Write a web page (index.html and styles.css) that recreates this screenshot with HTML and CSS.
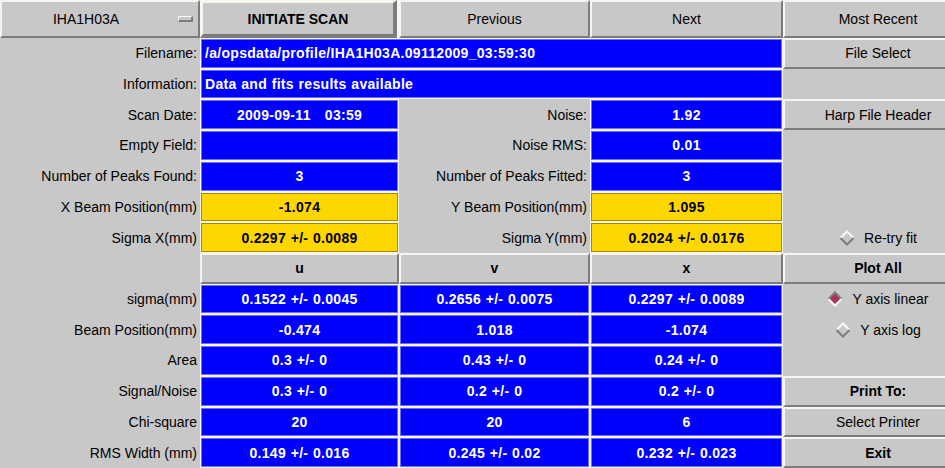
FILE: index.html
```html
<!DOCTYPE html>
<html>
<head>
<meta charset="utf-8">
<link rel="stylesheet" href="styles.css">
</head>
<body>
<div class="panel">
  <div class="cell btn opt"><span class="opt-text">IHA1H03A</span><span class="opt-ind"></span></div>
  <div class="cell btn dflt bold">INITIATE SCAN</div>
  <div class="cell btn">Previous</div>
  <div class="cell btn">Next</div>
  <div class="cell btn">Most Recent</div>

  <div class="cell lbl">Filename:</div>
  <div class="cell val left span3">/a/opsdata/profile/IHA1H03A.09112009_03:59:30</div>
  <div class="cell btn">File Select</div>

  <div class="cell lbl">Information:</div>
  <div class="cell val left span3">Data and fits results available</div>
  <div class="cell"></div>

  <div class="cell lbl">Scan Date:</div>
  <div class="cell val">2009-09-11   03:59</div>
  <div class="cell lbl">Noise:</div>
  <div class="cell val">1.92</div>
  <div class="cell btn">Harp File Header</div>

  <div class="cell lbl">Empty Field:</div>
  <div class="cell val"></div>
  <div class="cell lbl">Noise RMS:</div>
  <div class="cell val">0.01</div>
  <div class="cell"></div>

  <div class="cell lbl">Number of Peaks Found:</div>
  <div class="cell val">3</div>
  <div class="cell lbl">Number of Peaks Fitted:</div>
  <div class="cell val">3</div>
  <div class="cell"></div>

  <div class="cell lbl">X Beam Position(mm)</div>
  <div class="cell val yel">-1.074</div>
  <div class="cell lbl">Y Beam Position(mm)</div>
  <div class="cell val yel">1.095</div>
  <div class="cell"></div>

  <div class="cell lbl">Sigma X(mm)</div>
  <div class="cell val yel">0.2297 +/- 0.0089</div>
  <div class="cell lbl">Sigma Y(mm)</div>
  <div class="cell val yel">0.2024 +/- 0.0176</div>
  <div class="cell radio">
    <svg class="dia" width="16" height="16" viewBox="0 0 16 16"><polygon points="8,1.5 14.5,8 8,14.5 1.5,8" fill="#c8c8c8"/><polyline points="1.5,8 8,1.5 14.5,8" fill="none" stroke="#fafaf5" stroke-width="2"/><polyline points="1.5,8 8,14.5 14.5,8" fill="none" stroke="#7c7c7c" stroke-width="2"/></svg>
    <span>Re-try fit</span>
  </div>

  <div class="cell"></div>
  <div class="cell btn bold">u</div>
  <div class="cell btn bold">v</div>
  <div class="cell btn bold">x</div>
  <div class="cell btn bold">Plot All</div>

  <div class="cell lbl">sigma(mm)</div>
  <div class="cell val">0.1522 +/- 0.0045</div>
  <div class="cell val">0.2656 +/- 0.0075</div>
  <div class="cell val">0.2297 +/- 0.0089</div>
  <div class="cell radio">
    <svg class="dia" width="16" height="16" viewBox="0 0 16 16"><polygon points="8,1.5 14.5,8 8,14.5 1.5,8" fill="#b03060"/><polyline points="1.5,8 8,1.5 14.5,8" fill="none" stroke="#7c7c7c" stroke-width="2"/><polyline points="1.5,8 8,14.5 14.5,8" fill="none" stroke="#fafaf5" stroke-width="2"/></svg>
    <span>Y axis linear</span>
  </div>

  <div class="cell lbl">Beam Position(mm)</div>
  <div class="cell val">-0.474</div>
  <div class="cell val">1.018</div>
  <div class="cell val">-1.074</div>
  <div class="cell radio">
    <svg class="dia" width="16" height="16" viewBox="0 0 16 16"><polygon points="8,1.5 14.5,8 8,14.5 1.5,8" fill="#c8c8c8"/><polyline points="1.5,8 8,1.5 14.5,8" fill="none" stroke="#fafaf5" stroke-width="2"/><polyline points="1.5,8 8,14.5 14.5,8" fill="none" stroke="#7c7c7c" stroke-width="2"/></svg>
    <span>Y axis log</span>
  </div>

  <div class="cell lbl">Area</div>
  <div class="cell val">0.3 +/- 0</div>
  <div class="cell val">0.43 +/- 0</div>
  <div class="cell val">0.24 +/- 0</div>
  <div class="cell"></div>

  <div class="cell lbl">Signal/Noise</div>
  <div class="cell val">0.3 +/- 0</div>
  <div class="cell val">0.2 +/- 0</div>
  <div class="cell val">0.2 +/- 0</div>
  <div class="cell btn bold">Print To:</div>

  <div class="cell lbl">Chi-square</div>
  <div class="cell val">20</div>
  <div class="cell val">20</div>
  <div class="cell val">6</div>
  <div class="cell btn">Select Printer</div>

  <div class="cell lbl">RMS Width (mm)</div>
  <div class="cell val">0.149 +/- 0.016</div>
  <div class="cell val">0.245 +/- 0.02</div>
  <div class="cell val">0.232 +/- 0.023</div>
  <div class="cell btn bold">Exit</div>
</div>
</body>
</html>
```

FILE: styles.css
```css
* { box-sizing: border-box; }

html, body { overflow: hidden; }

body {
  margin: 0;
  background: #c8c8c8;
  font-family: "Liberation Sans", Arial, Helvetica, sans-serif;
  font-size: 14px;
  color: #000;
}

.panel {
  display: grid;
  width: 973px;
  height: 468px;
  grid-template-columns: 200px 199px 191px 193px 190px;
  grid-template-rows: 38px repeat(14, 1fr);
}

.cell {
  display: flex;
  align-items: center;
  justify-content: center;
  min-width: 0;
  white-space: pre;
  overflow: hidden;
}

.lbl {
  justify-content: flex-end;
  padding-right: 3px;
}

.val {
  background: #0000ff;
  color: #fff;
  font-weight: bold;
  border: 1px solid #f6f5ef;
  box-shadow: inset 0 0 0 1px #6e6eff;
  letter-spacing: 0.3px;
  word-spacing: 0.5px;
}

.val.left {
  justify-content: flex-start;
  padding-left: 4px;
}

.val.yel {
  background: #ffd700;
  color: #000;
  box-shadow: inset 0 0 0 1px #a08a00;
}

.span3 { grid-column: span 3; }

.btn {
  background: #c8c8c8;
  border-style: solid;
  border-width: 2px;
  border-color: #f6f5ef #7c7c7c #7c7c7c #f6f5ef;
}

.bold { font-weight: bold; }

.dflt {
  border-width: 3px 4px 4px 3px;
  margin-right: 2px;
  box-shadow: 2px 0 0 #f6f5ef;
}

.opt {
  justify-content: flex-start;
}

.opt-text {
  flex: 1;
  text-align: center;
}

.opt-ind {
  width: 15px;
  height: 6px;
  margin: 0 5px 0 8px;
  background: #c8c8c8;
  border-style: solid;
  border-width: 1px 2px 2px 1px;
  border-color: #fafaf5 #7c7c7c #7c7c7c #fafaf5;
}

.radio {
  gap: 9px;
}

.dia { flex: none; }
```
